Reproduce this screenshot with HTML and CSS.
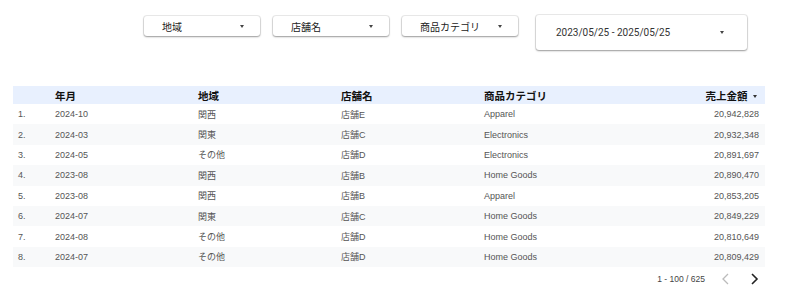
FILE: index.html
```html
<!DOCTYPE html>
<html lang="ja">
<head>
    <meta charset="UTF-8">
    <title>売上レポート</title>
    <link rel="stylesheet" href="styles.css">
</head>
<body>
    <div class="filters">
        <div class="select"><span>地域</span><i class="caret"></i></div>
        <div class="select"><span>店舗名</span><i class="caret"></i></div>
        <div class="select"><span>商品カテゴリ</span><i class="caret"></i></div>
        <div class="select date"><span>2023/05/25 - 2025/05/25</span><i class="caret"></i></div>
    </div>

    <table class="report">
        <thead>
            <tr>
                <th class="idx"></th>
                <th>年月</th>
                <th>地域</th>
                <th>店舗名</th>
                <th>商品カテゴリ</th>
                <th class="num">売上金額 <i class="caret"></i></th>
            </tr>
        </thead>
        <tbody>
            <tr><td class="idx">1.</td><td>2024-10</td><td>関西</td><td>店舗E</td><td>Apparel</td><td class="num">20,942,828</td></tr>
            <tr><td class="idx">2.</td><td>2024-03</td><td>関東</td><td>店舗C</td><td>Electronics</td><td class="num">20,932,348</td></tr>
            <tr><td class="idx">3.</td><td>2024-05</td><td>その他</td><td>店舗D</td><td>Electronics</td><td class="num">20,891,697</td></tr>
            <tr><td class="idx">4.</td><td>2023-08</td><td>関西</td><td>店舗B</td><td>Home Goods</td><td class="num">20,890,470</td></tr>
            <tr><td class="idx">5.</td><td>2023-08</td><td>関西</td><td>店舗B</td><td>Apparel</td><td class="num">20,853,205</td></tr>
            <tr><td class="idx">6.</td><td>2024-07</td><td>関東</td><td>店舗C</td><td>Home Goods</td><td class="num">20,849,229</td></tr>
            <tr><td class="idx">7.</td><td>2024-08</td><td>その他</td><td>店舗D</td><td>Home Goods</td><td class="num">20,810,649</td></tr>
            <tr><td class="idx">8.</td><td>2024-07</td><td>その他</td><td>店舗D</td><td>Home Goods</td><td class="num">20,809,429</td></tr>
        </tbody>
    </table>

    <div class="pager">
        <span class="range">1 - 100 / 625</span>
        <svg class="nav off" width="10" height="12" viewBox="0 0 10 12"><path d="M7 1 L2 6 L7 11" fill="none" stroke="currentColor" stroke-width="1.3"/></svg>
        <svg class="nav" width="10" height="12" viewBox="0 0 10 12"><path d="M3 1 L8 6 L3 11" fill="none" stroke="currentColor" stroke-width="1.6"/></svg>
    </div>
</body>
</html>
```

FILE: styles.css
```css
body {
    margin: 0;
    background: #fff;
    font-family: Roboto, "Noto Sans CJK JP", sans-serif;
    color: #202124;
}
.filters {
    display: flex;
    align-items: flex-start;
    gap: 13px;
    padding: 16px 0 0 144px;
}
.select {
    display: flex;
    align-items: center;
    justify-content: space-between;
    box-sizing: border-box;
    width: 116px;
    height: 20px;
    padding: 0 16px 0 18px;
    background: #fff;
    border-radius: 3px;
    box-shadow: 0 0 0 1px rgba(0,0,0,0.08), 0 1px 2px rgba(0,0,0,0.35);
    font-size: 10px;
    color: #222;
}
.select.date {
    width: 211px;
    height: 35px;
    margin: -1px 0 0 5px;
    padding: 0 23px 0 20px;
    font-size: 10px;
    color: #333;
}
.caret {
    display: inline-block;
    width: 0;
    height: 0;
    border-left: 2.5px solid transparent;
    border-right: 2.5px solid transparent;
    border-top: 3px solid #444;
}
.report {
    border-collapse: collapse;
    table-layout: fixed;
    width: 752px;
    margin: 36px 0 0 13px;
    font-family: "Liberation Sans", Arial, "Noto Sans CJK JP", sans-serif;
    font-size: 9px;
    color: #555;
}
.report th {
    height: 18px;
    padding: 0;
    background: #e8f0fe;
    text-align: left;
    font-family: "Noto Sans CJK JP", sans-serif;
    font-size: 10.5px;
    font-weight: bold;
    color: #111;
}
.report td {
    height: 20.4px;
    padding: 0;
}
.report tbody tr:nth-child(even) td {
    background: #f8f9fa;
}
.report .idx {
    width: 42px;
    padding-left: 5px;
    box-sizing: border-box;
}
.report th:nth-child(2), .report th:nth-child(3), .report th:nth-child(4), .report th:nth-child(5) {
    width: 143px;
}
.report .num {
    text-align: right;
    padding-right: 6px;
}
.report th.num {
    padding-right: 8px;
}
.report th .caret {
    margin-left: 3px;
    vertical-align: middle;
    border-top-color: #333;
}
.pager {
    display: flex;
    align-items: center;
    justify-content: flex-end;
    width: 759px;
    height: 24px;
    font-family: "Liberation Sans", Arial, sans-serif;
    font-size: 8.5px;
    color: #444;
}
.range {
    margin-right: 16px;
}
.nav {
    color: #222;
    margin-left: 18px;
}
.nav.off {
    color: #bbb;
    margin-left: 0;
}
```
